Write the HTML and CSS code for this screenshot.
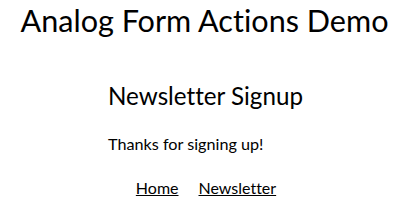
FILE: index.html
```html
<!DOCTYPE html>
<html lang="en">
<head>
<meta charset="utf-8">
<title>Analog Form Actions Demo</title>
<link rel="stylesheet" href="styles.css">
</head>
<body>
  <h1 class="title">Analog Form Actions Demo</h1>
  <main class="page">
    <div class="card">
      <h2 class="card-title">Newsletter Signup</h2>
      <p class="message">Thanks for signing up!</p>
    </div>
    <nav class="nav">
      <a class="nav-link" href="#">Home</a>
      <a class="nav-link" href="#">Newsletter</a>
    </nav>
  </main>
</body>
</html>
```

FILE: styles.css
```css
html, body {
  margin: 0;
  padding: 0;
  background: #ffffff;
}
body {
  font-family: Lato, "Liberation Sans", sans-serif;
  color: #000000;
  font-variant-ligatures: none;
}
.title {
  margin: 3px 0 0;
  font-size: 30.6px;
  line-height: 1.2;
  font-weight: 400;
  text-align: center;
}
.page {
  display: flex;
  flex-direction: column;
  align-items: center;
  margin-top: 41px;
}
.card {
  text-align: left;
  padding-left: 2px;
}
.card-title {
  margin: 0;
  font-size: 24.2px;
  line-height: 1.2;
  font-weight: 400;
}
.message {
  margin: 24px 0 0;
  font-size: 16.2px;
  line-height: 1.2;
}
.nav {
  display: flex;
  gap: 20px;
  margin-top: 25px;
  padding-left: 3px;
  font-size: 16px;
  line-height: 1.2;
}
.nav-link {
  color: #000000;
  text-decoration: underline;
}
```
